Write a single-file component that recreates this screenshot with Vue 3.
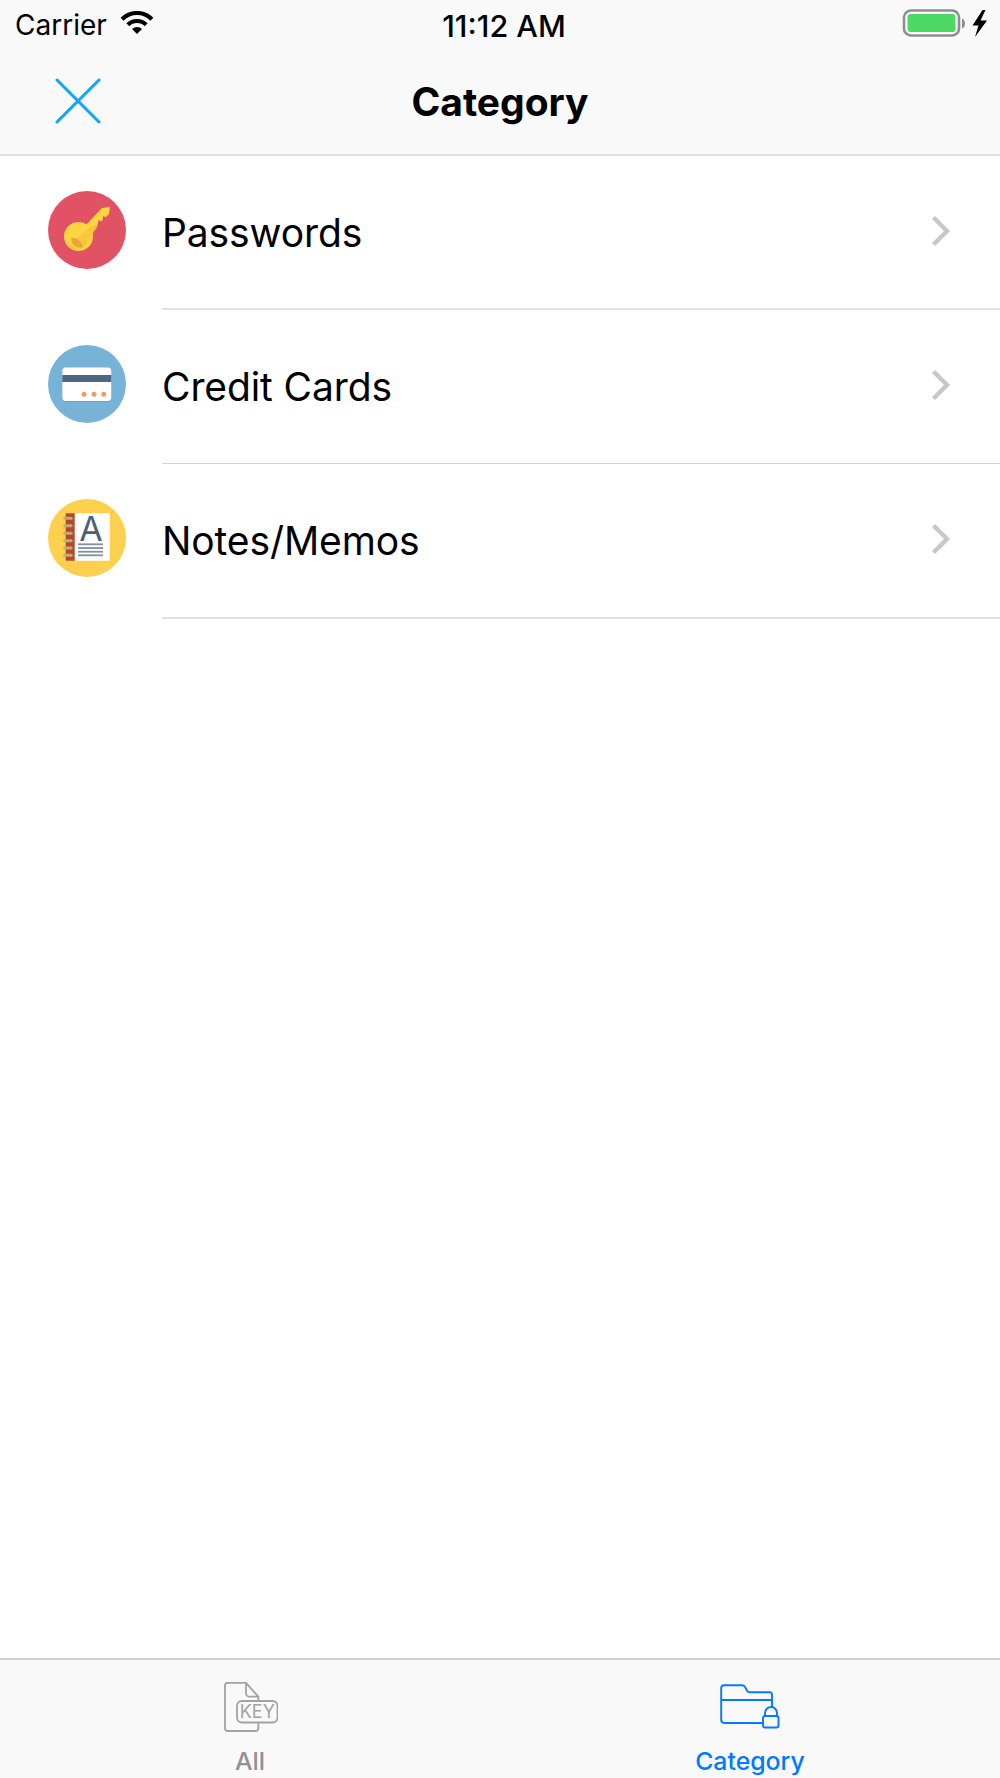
<script setup>
const rows = [
  { name: 'Passwords', kind: 'key' },
  { name: 'Credit Cards', kind: 'card' },
  { name: 'Notes/Memos', kind: 'note' },
]
const ringYs = [19.3, 26.7, 34.3, 41.7, 49, 56.3]
const lineYs = [45.3, 49.1, 52.7, 56.3]
</script>

<template>
  <div class="screen">
    <header class="top">
      <div class="status">
        <div class="status-left">
          <span class="carrier">Carrier</span>
          <svg class="wifi" viewBox="0 0 34 23" width="34" height="23">
            <path d="M2.1 8.2A21 21 0 0 1 31.9 8.2" fill="none" stroke="#000" stroke-width="4.2" />
            <path d="M7.8 13.8A13 13 0 0 1 26.2 13.8" fill="none" stroke="#000" stroke-width="4.2" />
            <path d="M17 23L12 18A7 7 0 0 1 22 18Z" fill="#000" />
          </svg>
        </div>
        <span class="time">11:12 AM</span>
        <div class="status-right">
          <svg class="battery" viewBox="0 0 86 30" width="86" height="30">
            <rect x="2" y="1.5" width="55" height="25" rx="7" fill="#fff" stroke="#8e8e8e" stroke-width="2.6" />
            <rect x="5.5" y="5" width="48" height="18" rx="3" fill="#4cd964" />
            <path d="M60 9.5Q63 10.5 63 14.5T60 19.5Z" fill="#8e8e8e" />
            <path d="M80.5 1L70.5 16.5H76.5L73 28L85 11.5H78.5L83.5 1Z" fill="#000" />
          </svg>
        </div>
      </div>
      <div class="nav">
        <svg class="close" viewBox="0 0 46 46" width="46" height="46">
          <path d="M2 2L44 44M44 2L2 44" stroke="#0aa6ff" stroke-width="3" stroke-linecap="round" />
        </svg>
        <h1 class="title">Category</h1>
        <span></span>
      </div>
    </header>

    <main class="list">
      <div v-for="row in rows" :key="row.name" class="row">
        <svg class="badge" viewBox="0 0 78 78" width="78" height="78">
          <template v-if="row.kind === 'key'">
            <circle cx="39" cy="39" r="39" fill="#e15364" />
            <path d="M37 35L54 17L62 16L61 23L57.5 26.5L55.5 24.5L54 30.5L50.5 29L49 36L45 35L42 46Z" fill="#fdd542" />
            <circle cx="30.5" cy="45.5" r="14.5" fill="#fdd542" />
            <path d="M41 37L45 35L49 36L42 46A14.5 14.5 0 0 1 20 56Z" fill="#fbc63c" />
            <path d="M23 47.5C27 45 33 50 35 56C29 58 24 54 23 47.5Z" fill="#e9a53b" />
          </template>
          <template v-else-if="row.kind === 'card'">
            <circle cx="39" cy="39" r="39" fill="#77b3d6" />
            <rect x="14.3" y="23.4" width="49" height="33.4" rx="3.5" fill="#5f8ba8" opacity=".6" />
            <rect x="14.3" y="22.6" width="49" height="33.4" rx="3.5" fill="#fff" />
            <rect x="14.3" y="30" width="49" height="7" fill="#4f6580" />
            <circle cx="36" cy="49.3" r="2.5" fill="#e8a062" />
            <circle cx="46" cy="49.3" r="2.5" fill="#e8a062" />
            <circle cx="55.7" cy="49.3" r="2.5" fill="#e8a062" />
          </template>
          <template v-else>
            <circle cx="39" cy="39" r="39" fill="#fed04f" />
            <rect x="17.7" y="14.3" width="9.5" height="47.4" fill="#b6472b" />
            <rect x="26.7" y="14.3" width="35" height="47.4" rx="1" fill="#fff" />
            <rect v-for="y in ringYs" :key="y" x="15.2" :y="y - 1.5" width="9.5" height="3" rx="1.5" fill="#b9ad7a" />
            <text x="43" y="42" class="note-a" text-anchor="middle">A</text>
            <rect v-for="y in lineYs" :key="y" x="30" :y="y - 0.9" width="25" height="1.8" fill="#7f909f" />
          </template>
        </svg>
        <span class="label">{{ row.name }}</span>
        <svg class="chevron" viewBox="0 0 20 32" width="20" height="32">
          <path d="M2.5 2.5L16 16L2.5 29.5" fill="none" stroke="#c7c7cc" stroke-width="4.4" />
        </svg>
      </div>
    </main>

    <footer class="tabs">
      <div class="tab">
        <svg class="tab-icon" viewBox="-2 0 56 50" width="56" height="50">
          <path d="M34.3 19V14.7L22 .8H3.8A2.8 2.8 0 0 0 1 3.6V46.2A2.8 2.8 0 0 0 3.8 49H31.5A2.8 2.8 0 0 0 34.3 46.2V40" fill="none" stroke="#a2a2a2" stroke-width="1.8" />
          <path d="M22 .8V11.2A3.5 3.5 0 0 0 25.5 14.7H34.3" fill="none" stroke="#a2a2a2" stroke-width="1.8" />
          <rect x="13" y="19" width="40.5" height="21.5" rx="5" fill="none" stroke="#a2a2a2" stroke-width="1.8" />
          <text x="33.3" y="36" class="key-text" text-anchor="middle">KEY</text>
        </svg>
        <span class="tab-label">All</span>
      </div>
      <div class="tab active">
        <svg class="tab-icon" viewBox="0 0 60 46" width="60" height="46">
          <path d="M52 24V10.5A2.5 2.5 0 0 0 49.5 8.3H29.5A2.5 2.5 0 0 1 27 6.5L25 3A3.5 3.5 0 0 0 22 1.2H4A3 3 0 0 0 1.2 4V36A3 3 0 0 0 4 39H42.5" fill="none" stroke="#007aff" stroke-width="1.9" />
          <path d="M1.2 16H52" fill="none" stroke="#007aff" stroke-width="1.9" />
          <path d="M45 32V29A6 6 0 0 1 57 29V32" fill="none" stroke="#007aff" stroke-width="1.9" />
          <rect x="43" y="32" width="15.5" height="11.5" rx="2" fill="none" stroke="#007aff" stroke-width="1.9" />
        </svg>
        <span class="tab-label">Category</span>
      </div>
    </footer>
  </div>
</template>

<style>
html, body { margin: 0; background: #fff; }
</style>

<style scoped>
.screen {
  width: 1000px;
  height: 1778px;
  display: flex;
  flex-direction: column;
  font-family: Inter, "Liberation Sans", sans-serif;
  color: #000;
  background: #fff;
  overflow: hidden;
}
.top {
  background: #f9f9f9;
  border-bottom: 2px solid #dedede;
  height: 156px;
  box-sizing: border-box;
  flex: none;
}
.status {
  height: 50px;
  padding: 0 12px 0 15px;
  display: grid;
  grid-template-columns: 1fr auto 1fr;
  align-items: center;
}
.status-left { display: flex; align-items: center; gap: 13px; }
.carrier { font-size: 28px; }
.wifi { margin-top: -5px; }
.time { font-size: 30.5px; font-weight: 500; margin-left: 5px; }
.status-right { display: flex; justify-content: flex-end; }
.battery { margin-top: -2px; }
.nav {
  height: 103px;
  padding: 0 54px;
  display: grid;
  grid-template-columns: 1fr auto 1fr;
  align-items: center;
}
.close { margin: -1px 0 0 1px; }
.title { margin: 0; font-size: 39px; font-weight: 700; }
.list { flex: 1; }
.row {
  height: 154.2px;
  box-sizing: border-box;
  display: flex;
  align-items: center;
  padding: 0 49px 0 48px;
  position: relative;
}
.row::after {
  content: "";
  position: absolute;
  left: 162px;
  right: 0;
  bottom: 0;
  height: 2px;
  background: #e0e0e0;
}
.row:nth-child(2)::after { height: 1px; background: #d4d4d4; }
.badge { flex: none; margin-top: -6px; }
.label { flex: 1; margin: -2px 0 0 36px; font-size: 39px; letter-spacing: -0.1px; }
.chevron { flex: none; margin: -5px 0 0 1px; }
.note-a { font-size: 34px; fill: #4a6076; font-family: Inter, sans-serif; }
.tabs {
  flex: none;
  height: 120px;
  box-sizing: border-box;
  background: #f9f9f9;
  border-top: 2px solid #d0d0d0;
  display: grid;
  grid-template-columns: 1fr 1fr;
}
.tab {
  display: flex;
  flex-direction: column;
  align-items: center;
  color: #929292;
  padding-top: 22px;
}
.tab-icon { height: 50px; display: block; }
.tab-label { margin-top: 14px; font-size: 24.8px; font-weight: 500; line-height: 30px; }
.active { color: #007aff; }
.key-text { font-size: 18px; fill: #a2a2a2; font-family: Inter, sans-serif; }
</style>
